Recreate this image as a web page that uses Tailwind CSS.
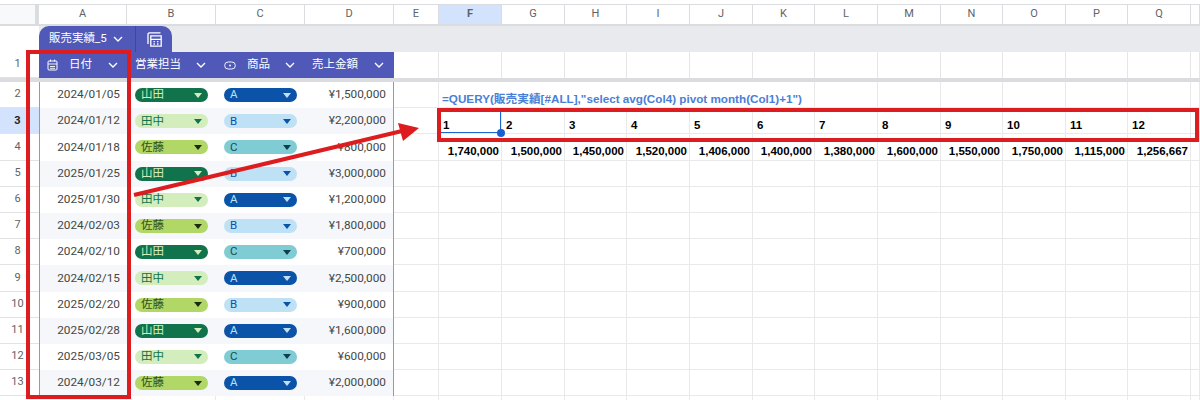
<!DOCTYPE html>
<html lang="ja">

<head>
  <meta charset="UTF-8" />
  <script src="https://cdn.jsdelivr.net/npm/@tailwindcss/browser@4"></script>
  <title>販売実績</title>
</head>

<body class="bg-white overflow-hidden">
  <div class="relative w-[1200px] h-[400px] overflow-hidden font-['Roboto','Noto_Sans_CJK_JP',sans-serif] text-[12px] text-[#444746]">

    <!-- column letters -->
    <div id="colHead" class="grid grid-cols-[39px_88px_89px_89px_89px_45px_63px_63px_62px_63px_63px_62px_63px_63px_62px_63px_62px_63px_9px] mt-1 h-[22px] border-t border-[#dadce0] border-b-2 border-b-[#dadce0]"></div>

    <!-- table name band -->
    <div class="flex h-[26px]">
      <div class="w-[39px] shrink-0"></div>
      <div class="flex-1 bg-[#e8eaed]">
        <div class="flex items-center w-[133px] h-[26px] bg-[#5059b8] rounded-t-[10px] text-white">
          <span class="w-[97px] pl-[10px] flex items-center gap-[6px] border-r border-[#3f479c] h-full text-[11.5px] whitespace-nowrap">販売実績_5
            <svg class="w-[10px] h-[10px]" viewBox="0 0 10 10" fill="none" stroke="white" stroke-width="1.3"><path d="M1 3l4 4 4-4" /></svg>
          </span>
          <svg class="w-[15px] h-[15px] ml-[11px]" viewBox="0 0 15 15" fill="none" stroke="white" stroke-width="1.3"><path d="M13.500 .8H2.500a1.500 1.500 0 0 0-1.500 1.500V12" /><path d="M3.800 3.800h10.400v10.400H3.800z" /><path d="M3.800 7.300h10.400M6.500 9.700h1.400M10 9.700h1.400M6.500 12h1.400M10 12h1.400" /></svg>
        </div>
      </div>
    </div>

    <!-- row 1, the table header -->
    <div id="headRow" class="grid grid-cols-[39px_88px_89px_89px_89px_45px_63px_63px_62px_63px_63px_62px_63px_63px_62px_63px_62px_63px_9px] h-[26px]"></div>
    <div class="h-[4px] bg-[#dadce0]"></div>

    <!-- body -->
    <div id="rows"></div>

    <!-- annotations on top of the sheet -->
    <div class="absolute left-[26px] top-[50px] w-[105px] h-[349px] border-[4px] border-[#dd1c1f]"></div>
    <div class="absolute left-[437px] top-[108px] w-[762px] h-[34px] border-[4px] border-[#dd1c1f]"></div>
    <svg class="absolute left-0 top-0" width="1200" height="400" viewBox="0 0 1200 400">
      <path d="M134 195L402 131" stroke="#dd1c1f" stroke-width="4" />
      <path d="M419 128L398 123L403 141Z" fill="#dd1c1f" />
    </svg>
  </div>

  <script>
    const cols = ['', 'A', 'B', 'C', 'D', 'E', 'F', 'G', 'H', 'I', 'J', 'K', 'L', 'M', 'N', 'O', 'P', 'Q', ''];
    const gridCols = 'grid grid-cols-[39px_88px_89px_89px_89px_45px_63px_63px_62px_63px_63px_62px_63px_63px_62px_63px_62px_63px_9px] h-[26.2px]';

    const caret = (color) => `<svg class="w-[8px] h-[5px] shrink-0" viewBox="0 0 8 5"><path d="M0 0h8L4 5z" fill="${color}" /></svg>`;
    const chevron = '<svg class="w-[10px] h-[10px] shrink-0" viewBox="0 0 10 10" fill="none" stroke="white" stroke-width="1.3"><path d="M1 3l4 4 4-4" /></svg>';

    const pills = {
      '山田': ['bg-[#11734b] text-[#d4edbc]', '#d4edbc'],
      '田中': ['bg-[#d4edbc] text-[#11734b]', '#11734b'],
      '佐藤': ['bg-[#b1d766] text-[#38501a]', '#1e2a0c'],
      'A': ['bg-[#0a53a8] text-[#bfe1f6]', '#bfe1f6'],
      'B': ['bg-[#bfe1f6] text-[#0a53a8]', '#0a53a8'],
      'C': ['bg-[#7fccd4] text-[#0e4f5c]', '#0e3f4c'],
    };
    const pill = (name) => `<div class="mx-auto flex items-center justify-between w-[73px] h-[14px] pl-[6px] pr-[6px] rounded-full text-[11.5px] leading-none ${pills[name][0]}"><span>${name}</span>${caret(pills[name][1])}</div>`;

    const data = [
      ['2024/01/05', '山田', 'A', '¥1,500,000'],
      ['2024/01/12', '田中', 'B', '¥2,200,000'],
      ['2024/01/18', '佐藤', 'C', '¥800,000'],
      ['2025/01/25', '山田', 'B', '¥3,000,000'],
      ['2025/01/30', '田中', 'A', '¥1,200,000'],
      ['2024/02/03', '佐藤', 'B', '¥1,800,000'],
      ['2024/02/10', '山田', 'C', '¥700,000'],
      ['2024/02/15', '田中', 'A', '¥2,500,000'],
      ['2025/02/20', '佐藤', 'B', '¥900,000'],
      ['2025/02/28', '山田', 'A', '¥1,600,000'],
      ['2025/03/05', '田中', 'C', '¥600,000'],
      ['2024/03/12', '佐藤', 'A', '¥2,000,000'],
    ];
    const months = ['1', '2', '3', '4', '5', '6', '7', '8', '9', '10', '11', '12'];
    const averages = ['1,740,000', '1,500,000', '1,450,000', '1,520,000', '1,406,000', '1,400,000', '1,380,000', '1,600,000', '1,550,000', '1,750,000', '1,115,000', '1,256,667'];
    const boldCell = "font-['Liberation_Sans','Noto_Sans_CJK_JP',sans-serif] font-bold text-[11.5px] leading-none text-black items-end pb-[2px]";

    // column letters
    document.getElementById('colHead').innerHTML = cols.map((c, i) => {
      if (i === 0) return '<div class="bg-[#f8f9fa] border-r-[4px] border-[#dadce0]"></div>';
      const active = c === 'F' ? 'bg-[#d3e3fd] font-bold text-[#1f1f1f]' : '';
      return `<div class="flex items-center justify-center border-r border-[#dadce0] text-[11px] text-[#5f6368] ${active}">${c}</div>`;
    }).join('');

    // table header in row 1
    const heads = [
      ['日付', '<svg class="w-[11px] h-[12px] shrink-0" viewBox="0 0 11 12" fill="none" stroke="white"><rect x="1" y="2" width="9" height="9" rx="1" /><path d="M1 5h9M3.500 .5v2M7.500 .5v2M3 7.500h5M3 9.300h5" stroke-width=".9" /></svg>', 'pl-[8px] pr-[9px]', 'gap-[11px]'],
      ['営業担当', '', 'pl-[8px] pr-[10px]', ''],
      ['商品', '<svg class="w-[12px] h-[9px] shrink-0" viewBox="0 0 13 9" fill="none" stroke="white"><rect x=".7" y=".7" width="11.600" height="7.600" rx="3.800" /><circle cx="6.500" cy="4.500" r="1" fill="white" stroke="none" /></svg>', 'pl-[8px] pr-[10px]', 'gap-[11px]'],
      ['売上金額', '', 'pl-[7px] pr-[10px]', ''],
    ];
    document.getElementById('headRow').innerHTML = cols.map((c, i) => {
      if (i === 0) return '<div class="flex items-center justify-center pr-[4px] text-[11px] text-[#5f6368] border-b border-[#e3e3e3]">1</div>';
      if (i <= 4) {
        const h = heads[i - 1];
        return `<div class="flex items-center justify-between bg-[#5059b8] text-white text-[11.5px] ${h[2]}"><span class="flex items-center ${h[3]}">${h[1]}<span>${h[0]}</span></span>${chevron}</div>`;
      }
      return '<div class="border-r border-[#e6e6e6]"></div>';
    }).join('');

    // sheet rows 2 to 14, row 14 only shows its top edge
    document.getElementById('rows').innerHTML = Array.from({ length: 13 }, (_, r) => {
      const rowNo = r + 2;
      const row = data[r];
      const band = r % 2 === 1 ? 'bg-[#f5f7fa]' : 'bg-white';
      return `<div class="${gridCols}">` + cols.map((c, i) => {
        if (i === 0) {
          const active = rowNo === 3 ? 'bg-[#d3e3fd] font-bold text-[#1f1f1f]' : 'text-[#5f6368]';
          return `<div class="flex items-center justify-center pr-[4px] text-[11px] border-b border-[#e3e3e3] ${active}">${row ? rowNo : ''}</div>`;
        }
        if (row && i === 1) return `<div class="flex items-center justify-end pr-[7px] text-[11.8px] border-l border-[#8f96cf] ${band}">${row[0]}</div>`;
        if (row && (i === 2 || i === 3)) return `<div class="flex items-center ${band}">${pill(row[i - 1])}</div>`;
        if (row && i === 4) return `<div class="flex items-center justify-end pr-[7px] text-[11.8px] border-r border-[#8f96cf] ${band}">${row[3]}</div>`;

        let text = '';
        let cls = 'items-center';
        if (rowNo === 2 && c === 'F') {
          text = '=QUERY(販売実績[#ALL],"select avg(Col4) pivot month(Col1)+1")';
          cls = "items-end pb-[2px] leading-none overflow-visible whitespace-nowrap pl-[3px] text-[#4a7fd6] font-['Liberation_Sans','Noto_Sans_CJK_JP',sans-serif] font-bold text-[11.7px]";
        }
        if (rowNo === 3 && i >= 6 && i <= 17) {
          text = months[i - 6];
          cls = `pl-[4px] ${boldCell}`;
        }
        if (rowNo === 4 && i >= 6 && i <= 17) {
          text = averages[i - 6];
          cls = `justify-end pr-[2px] ${boldCell}`;
        }
        // the formula overflows F2 to K2, so those cells lose their right gridline
        const right = rowNo === 2 && i >= 6 && i <= 10 ? '' : 'border-r';
        const isSelected = rowNo === 3 && c === 'F';
        const selection = isSelected
          ? '<span class="absolute inset-0 border border-[#1a66d2]"></span><span class="absolute -right-[4px] -bottom-[4px] w-[8px] h-[8px] rounded-full bg-[#1a5fd0]"></span>'
          : '';
        return `<div class="flex ${right} border-b border-[#e9e9e9] ${cls} ${isSelected ? 'relative' : ''}"><span>${text}</span>${selection}</div>`;
      }).join('') + '</div>';
    }).join('');
  </script>
</body>

</html>
